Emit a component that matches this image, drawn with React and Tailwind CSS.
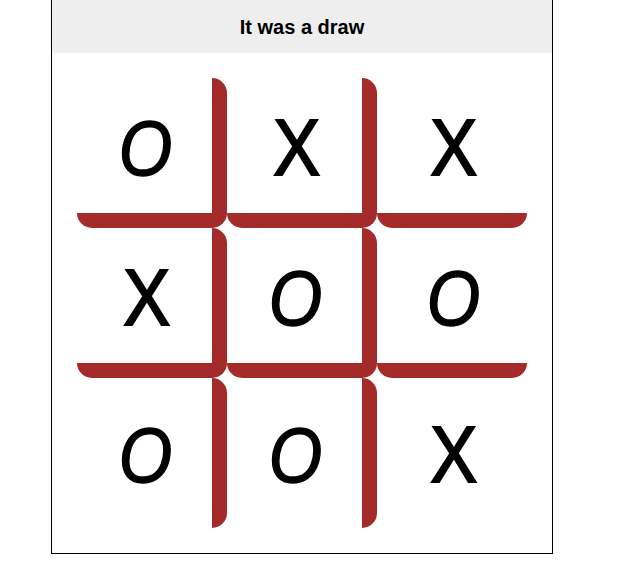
import React from 'react';

const board = ['O', 'X', 'X', 'X', 'O', 'O', 'O', 'O', 'X'];

function Square({ value, index }) {
  const col = index % 3;
  const row = Math.floor(index / 3);
  const right = col < 2 ? 'border-r-[15px]' : '';
  const bottom = row < 2 ? 'border-b-[15px]' : '';
  return (
    <div
      className={`w-[150px] h-[150px] flex items-center justify-center border-solid border-0 border-[#a52a2a] rounded-[15px] ${right} ${bottom}`}
    >
      {value === 'O' ? (
        <span className="text-[78px] leading-none italic text-black font-['Liberation_Sans',sans-serif] scale-x-[0.88] inline-block mt-[4px] ml-[2px] [-webkit-text-stroke:1.5px_black] [stroke-linejoin:round]">
          O
        </span>
      ) : (
        <span className="text-[80px] leading-none text-black font-['Liberation_Sans',sans-serif] scale-x-[0.88] inline-block mt-[4px] ml-[4px] [-webkit-text-stroke:2px_black] [stroke-linejoin:round]">
          X
        </span>
      )}
    </div>
  );
}

export default function App() {
  return (
    <div className="w-[502px] ml-[51px] border-x border-b border-black bg-white font-['Liberation_Sans',Arial,sans-serif]">
      <div className="h-[53px] bg-[#eeeeee] flex items-center justify-center">
        <h1 className="text-[20px] font-bold text-black">It was a draw</h1>
      </div>
      <div className="flex justify-center pt-[25px] pb-[25px]">
        <div className="grid grid-cols-3 w-[450px]">
          {board.map((v, i) => (
            <Square key={i} value={v} index={i} />
          ))}
        </div>
      </div>
    </div>
  );
}
